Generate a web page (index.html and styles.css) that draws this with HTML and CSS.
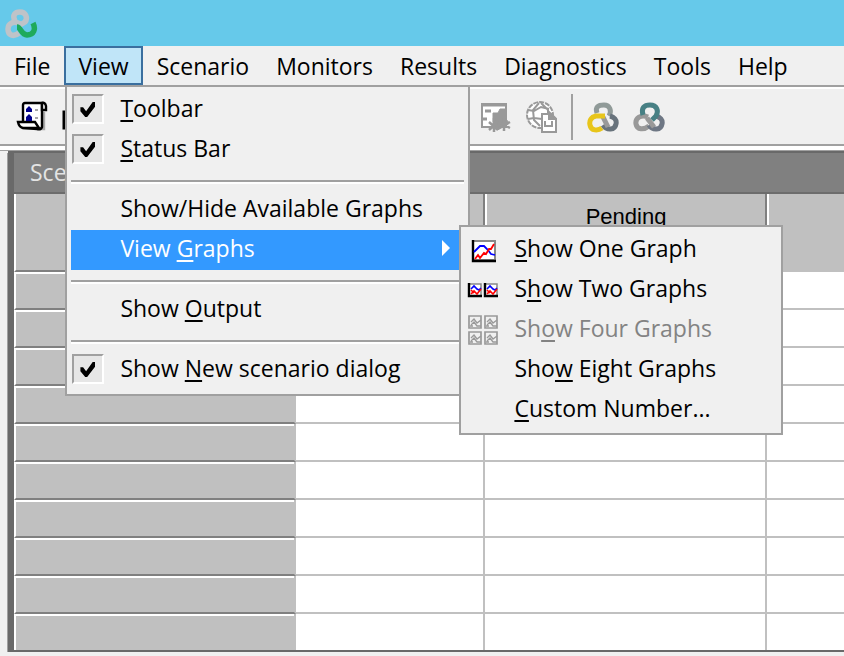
FILE: index.html
```html
<!DOCTYPE html>
<html lang="en">
<head>
<meta charset="utf-8">
<title>Controller</title>
<link rel="stylesheet" href="styles.css">
</head>
<body>
<header class="titlebar">
  <svg class="logo" viewBox="0 0 34 32" fill="none" stroke-width="5.5" aria-hidden="true">
    <path stroke="#bfc3c8" d="M11 13C8 7 11 4 16 4c6 0 8 6 5 10l-5 3"/>
    <path stroke="#bfc3c8" d="M16 16C9 12 4 16 4 21c0 7 6 8 11 4"/>
    <path stroke="#1faa5c" d="M13 19c4 0 4 8 10 8 7 0 9-6 6-12"/>
  </svg>
</header>

<nav class="menubar" aria-label="Main">
  <button class="menu-title">File</button>
  <div class="menu-host">
    <button class="menu-title open" aria-expanded="true">View</button>
    <div class="menu view-menu">
      <label class="item"><input class="tick" type="checkbox" checked><span><u>T</u>oolbar</span></label>
      <label class="item"><input class="tick" type="checkbox" checked><span><u>S</u>tatus Bar</span></label>
      <hr class="separator">
      <button class="item">Show/Hide Available Graphs</button>
      <div class="menu-host">
        <button class="item selected" aria-expanded="true">View <u>G</u>raphs</button>
        <div class="menu sub-menu">
          <button class="item">
            <svg class="item-icon" viewBox="0 0 32 32" fill="none" aria-hidden="true">
              <path fill="#fff" stroke="#888" stroke-width="2" d="M6 7h22v19H6z"/>
              <path stroke="#000" stroke-width="2.4" d="M6 6v21h23"/>
              <path stroke="#00f" stroke-width="1.8" d="M7 18l6-6h4l4 4 3 4 4 1"/>
              <path stroke="#f00" stroke-width="1.8" d="M8 25l3-4 2 3 4-5 2 1 3-5 2 0 3-5"/>
            </svg><span><u>S</u>how One Graph</span></button>
          <button class="item">
            <svg class="item-icon" viewBox="0 0 32 32" fill="none" aria-hidden="true">
              <g id="mini">
                <path fill="#fff" stroke="#888" stroke-width="1.5" d="M2 10h12v12H2z"/>
                <path stroke="#000" stroke-width="2.4" d="M2 9v13h13"/>
                <path stroke="#00f" stroke-width="1.6" d="M4 15l3-3 3 3 2 1 2-2"/>
                <path stroke="#f00" stroke-width="1.6" d="M4 16l3 3M4 20l3-3 3 3 4-5"/>
              </g>
              <use href="#mini" x="16"/>
            </svg><span>S<u>h</u>ow Two Graphs</span></button>
          <button class="item" disabled>
            <svg class="item-icon" viewBox="0 0 32 32" fill="none" stroke="#999" aria-hidden="true">
              <g id="dim">
                <path stroke-width="1.7" d="M2 2h12v12H2z"/>
                <path stroke-width="1.3" d="M4 8l3-3 3 4 4-3M4 11l3-3 3 4h4M3 12h3"/>
              </g>
              <use href="#dim" x="16"/><use href="#dim" y="16"/><use href="#dim" x="16" y="16"/>
            </svg><span>Sh<u>o</u>w Four Graphs</span></button>
          <button class="item">Sho<u>w</u> Eight Graphs</button>
          <button class="item"><u>C</u>ustom Number...</button>
        </div>
      </div>
      <hr class="separator">
      <button class="item">Show <u>O</u>utput</button>
      <hr class="separator">
      <label class="item"><input class="tick" type="checkbox" checked><span>Show <u>N</u>ew scenario dialog</span></label>
    </div>
  </div>
  <button class="menu-title">Scenario</button>
  <button class="menu-title">Monitors</button>
  <button class="menu-title">Results</button>
  <button class="menu-title">Diagnostics</button>
  <button class="menu-title">Tools</button>
  <button class="menu-title">Help</button>
</nav>

<div class="toolbar" role="toolbar" aria-label="Toolbar">
  <div class="tools file-tools">
    <button class="tool" aria-label="Script">
      <svg viewBox="0 0 32 32" fill="none" stroke="#000" stroke-width="2.4" aria-hidden="true">
        <path stroke="#aaa" d="M28 11v17h-3"/>
        <path fill="#fff" d="M7 21V4q0-2 2-2h17v24q-1 3-5 2L7 27z"/>
        <path fill="#fff" d="M26 9V2q3-1 4 3v4z"/>
        <path fill="#fff" d="M2 21h17l4 6H7q-4-1-5-6z"/>
        <path fill="#00008b" stroke="none" d="M13 5l3 3v3h-6V8zM13 13l3 3v4h-6v-4z"/>
        <path stroke="#888" stroke-width="1.6" d="M19 9h3M19 17h3"/>
      </svg>
    </button>
    <button class="tool" aria-label="New">
      <svg viewBox="0 0 32 32" fill="none" stroke="#000" stroke-width="3" aria-hidden="true"><path d="M2 11h20v16H2z"/></svg>
    </button>
  </div>
  <div class="tools">
    <button class="tool" aria-label="Group results" disabled>
      <svg viewBox="0 0 32 32" fill="none" stroke="#999" stroke-width="2" aria-hidden="true">
        <path fill="#fff" d="M3 3h24v23H3z"/>
        <path stroke-width="3" d="M2 4h26M6 10h6M4 18h4"/>
        <path fill="#999" stroke-width="1" d="M14 12h5l2-4h6v10l3 4-3 3H16l-2-4z"/>
        <path stroke-width="2.5" d="M15 17v14M10 21l9 8M10 29l9-8M25 17v13M19 21l12 6M19 28l12-7"/>
      </svg>
    </button>
    <button class="tool" aria-label="Web report" disabled>
      <svg viewBox="0 0 32 32" fill="none" stroke="#999" stroke-width="2" aria-hidden="true">
        <circle cx="15" cy="14" r="13" fill="#fff" stroke-dasharray="5 1"/>
        <path d="M14 2L8 9l1 10 6 6M16 2l7 7v5M3 9l6 1 7-4 8 2M3 18l6-1 8 1"/>
        <path fill="#fff" d="M17 13h9l5 5v13H17z"/>
        <path fill="#999" d="M24 11l7 7h-7z"/>
        <path d="M20 20v5h7v-5"/>
      </svg>
    </button>
    <span class="divider"></span>
    <button class="tool" aria-label="Generator">
      <svg viewBox="0 0 32 32" fill="none" stroke-width="5" aria-hidden="true">
        <path stroke="#909a98" d="M10 12C8 6 11 4 17 4c6 0 8 6 5 11"/>
        <path stroke="#68737c" d="M16 24c4 6 12 5 13-1 1-4-2-7-6-8"/>
        <path stroke="#999" d="M16 16l5 10"/>
        <path stroke="#e8c51a" d="M18 15H9c-5 1-7 5-6 9 1 6 8 6 12 3"/>
      </svg>
    </button>
    <button class="tool" aria-label="Analysis">
      <svg viewBox="0 0 32 32" fill="none" stroke-width="5" aria-hidden="true">
        <path stroke="#999" d="M15 16C8 13 2 17 3 23c1 6 8 6 13 2"/>
        <path stroke="#6e7784" d="M16 24c4 6 12 5 13-1 1-4-2-7-6-8"/>
        <path stroke="#999" d="M14 17l7 9"/>
        <path stroke="#478084" d="M10 14C8 7 11 4 17 4c7 0 9 6 6 11l-4 4"/>
      </svg>
    </button>
  </div>
</div>

<main class="workspace">
  <section class="panel">
    <h1 class="panel-title">Scenario</h1>
    <table class="grid">
      <colgroup><col class="col-group"><col class="col-down"><col class="col-pending"><col></colgroup>
      <thead><tr><th></th><th></th><th>Pending</th><th></th></tr></thead>
      <tbody>
        <tr><th></th><td></td><td></td><td></td></tr>
        <tr><th></th><td></td><td></td><td></td></tr>
        <tr><th></th><td></td><td></td><td></td></tr>
        <tr><th></th><td></td><td></td><td></td></tr>
        <tr><th></th><td></td><td></td><td></td></tr>
        <tr><th></th><td></td><td></td><td></td></tr>
        <tr><th></th><td></td><td></td><td></td></tr>
        <tr><th></th><td></td><td></td><td></td></tr>
        <tr><th></th><td></td><td></td><td></td></tr>
        <tr><th></th><td></td><td></td><td></td></tr>
      </tbody>
    </table>
  </section>
</main>
</body>
</html>
```
FILE: styles.css
```css
* {
  box-sizing: border-box;
}

body {
  margin: 0;
  background: #f0f0f0;
  color: #000;
  font: 23px/32px "Open Sans", "Noto Sans", sans-serif;
}

button {
  margin: 0;
  border: 0;
  padding: 0;
  background: none;
  color: inherit;
  font: inherit;
  text-align: left;
  white-space: nowrap;
}

u {
  text-decoration-thickness: 2px;
  text-underline-offset: 3px;
}

.titlebar {
  height: 46px;
  padding: 8px 4px;
  background: #66c9ea;
}

.logo {
  display: block;
  width: 34px;
  height: 32px;
}

.menubar {
  display: flex;
  height: 43px;
  border-bottom: 2px solid #fff;
  box-shadow: inset 0 -2px #a0a0a0;
}

.menu-host {
  position: relative;
}

.menu-title {
  height: 39px;
  border: 2px solid transparent;
  padding: 0 12px;
}

.menu-host ~ .menu-title {
  padding-right: 11px;
}

.menu-title.open {
  border-color: #3a6f9f;
  background: #c0e5f8;
}

.menu {
  position: absolute;
  border: 2px solid #a0a0a0;
  background: #f0f0f0;
}

.view-menu {
  z-index: 1;
  top: 39px;
  left: 1px;
  width: 405px;
  padding: 3px 4px 4px;
}

.sub-menu {
  top: -5px;
  left: 388px;
  width: 324px;
  padding: 3px 5px;
}

.item {
  display: flex;
  align-items: center;
  position: relative;
  width: 100%;
  height: 40px;
  padding: 0 0 4px 49px;
  white-space: pre;
}

.sub-menu .item {
  padding-left: 48px;
}

.item:disabled {
  color: #838383;
}

.item.selected {
  background: #39f;
  color: #fff;
}

.item.selected::after {
  content: "";
  position: absolute;
  top: 10px;
  right: 14px;
  border: 8px solid transparent;
  border-left: 8px solid #fff;
  border-right: 0;
}

.item-icon {
  position: absolute;
  top: 4px;
  left: 1px;
  width: 32px;
  height: 32px;
}

.tick {
  appearance: none;
  position: absolute;
  top: 4px;
  left: 1px;
  width: 32px;
  height: 30px;
  margin: 0;
  border: 2px solid;
  border-color: #a0a0a0 #fff #fff #a0a0a0;
  background: #e6e6e6;
}

.tick:checked::before {
  content: "";
  display: block;
  width: 15px;
  height: 15px;
  margin: 6px;
  background: #000;
  clip-path: polygon(0 35%, 18% 35%, 38% 62%, 82% 0, 100% 0, 100% 28%, 45% 100%, 32% 100%, 0 62%);
}

.separator {
  height: 20px;
  margin: 0;
  border: 0;
  background: linear-gradient(#a0a0a0 50%, #fff 50%) 0 10px / 100% 4px no-repeat;
}

.toolbar {
  display: flex;
  align-items: center;
  height: 62px;
  padding: 0 0 6px 16px;
  border-bottom: 1px solid #a0a0a0;
  background: linear-gradient(#a0a0a0 33%, #fff 33%) 0 100% / 100% 6px no-repeat;
}

.tools {
  display: flex;
  align-items: center;
  gap: 14px;
}

.file-tools {
  flex: 0 0 463px;
}

.tool {
  width: 32px;
  height: 32px;
}

.tool svg {
  display: block;
}

.divider {
  width: 2px;
  height: 46px;
  background: #a0a0a0;
}

.workspace {
  padding-left: 8px;
}

.panel {
  border: solid #696969;
  border-width: 2px 0 2px 6px;
  box-shadow: -1px 2px #a0a0a0;
}

.panel-title {
  height: 41px;
  margin: 0;
  padding: 3px 16px;
  border-bottom: 2px solid #6c6c6c;
  background: #808080;
  color: #e4e4e4;
  font: inherit;
}

.grid {
  width: 100%;
  table-layout: fixed;
  border-collapse: separate;
  border-spacing: 0;
  background: #fff;
}

.col-group {
  width: 282px;
}

.col-down {
  width: 189px;
}

.col-pending {
  width: 282px;
}

.grid th,
.grid td {
  height: 38px;
  padding: 0;
  border: 0 solid #c0c0c0;
  border-width: 0 2px 2px 0;
}

.grid th {
  background: #c0c0c0;
  font: 22px/24px "Liberation Sans", sans-serif;
}

.grid thead th {
  height: 78px;
  padding-top: 11px;
  border-right-color: #808080;
  border-left: 2px solid #fff;
  vertical-align: top;
}

.grid tbody th {
  border-left: 2px solid #fff;
  border-bottom-color: #808080;
  box-shadow: inset 0 2px #fff;
}

.grid thead th:first-child {
  border-bottom-color: #808080;
}

.grid tr > :last-child {
  border-right: 0;
}

.grid tbody tr:last-child > * {
  height: 36px;
  border-bottom: 0;
}
```
